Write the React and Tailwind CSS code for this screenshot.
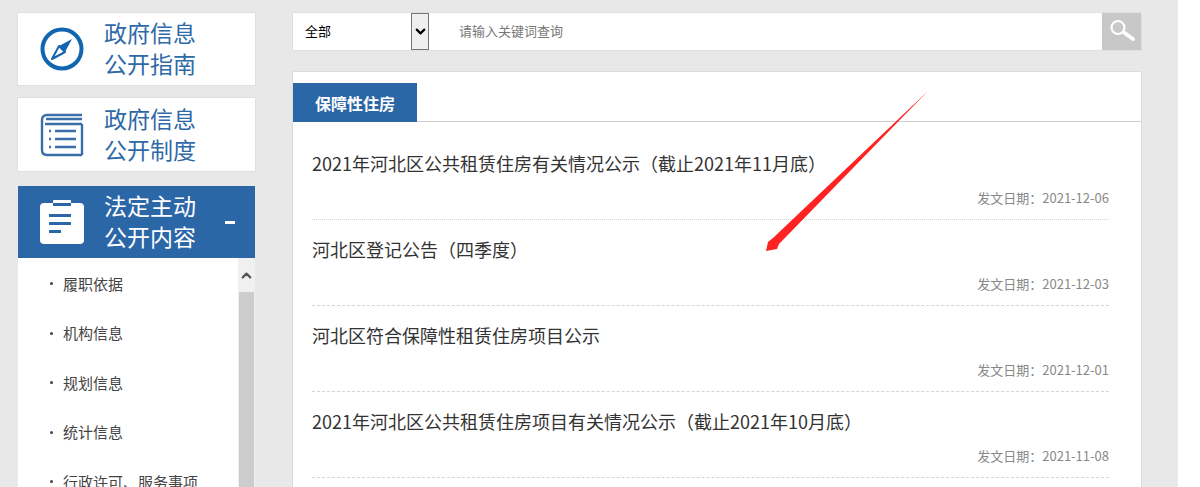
import React from 'react';
import { ChevronDown, ChevronUp } from 'lucide-react';

const cjk = { fontFamily: '"Noto Sans CJK SC", "Liberation Sans", sans-serif' };

const news = [
    { title: '2021年河北区公共租赁住房有关情况公示\uFF08截止2021年11月底\uFF09', date: '发文日期\uFF1A2021-12-06', dotted: true },
    { title: '河北区登记公告\uFF08四季度\uFF09', date: '发文日期\uFF1A2021-12-03' },
    { title: '河北区符合保障性租赁住房项目公示', date: '发文日期\uFF1A2021-12-01' },
    { title: '2021年河北区公共租赁住房项目有关情况公示\uFF08截止2021年10月底\uFF09', date: '发文日期\uFF1A2021-11-08' },
];

const subMenu = ['履职依据', '机构信息', '规划信息', '统计信息', '行政许可、服务事项'];

const CompassIcon = () => (
    <svg width="44" height="44" viewBox="0 0 44 44" fill="none">
        <circle cx="22" cy="22" r="19.5" stroke="#1266b0" strokeWidth="4" />
        <path d="M32 12 L25 25 L19 19 Z" fill="#1266b0" />
        <path d="M12 32 L19 19 L25 25 Z" fill="none" stroke="#1266b0" strokeWidth="2" strokeLinejoin="round" />
    </svg>
);

const ListIcon = () => (
    <svg width="44" height="44" viewBox="0 0 44 44" fill="none" stroke="#3a6ea8" strokeWidth="2.4">
        <path d="M42 2 H7 Q2 2 2 7 V37 Q2 42 7 42 H42" />
        <path d="M6 6 H42" />
        <path d="M42 11 H5 M42 11 V42" />
        <path d="M15 18 H36 M15 26 H36 M15 34 H36" />
        <path d="M9 18 H11 M9 26 H11 M9 34 H11" />
    </svg>
);

const ClipboardIcon = () => (
    <svg width="44" height="44" viewBox="0 0 44 44">
        <path d="M4 3 H13 V1 Q13 0 14 0 H30 Q31 0 31 1 V3 H40 Q44 3 44 7 V40 Q44 44 40 44 H4 Q0 44 0 40 V7 Q0 3 4 3 Z" fill="#fff" />
        <path d="M13 3 H31 V6 H13 Z" fill="#2b66a6" />
        <path d="M9 14 H31 V17 H9 Z M9 22 H31 V25 H9 Z M9 30 H21 V33 H9 Z" fill="#2b66a6" />
    </svg>
);

const SideCard = ({ icon, top, bottom, active, height }) => (
    <div className={`flex items-center pl-[22px] ${height} ${active ? 'bg-[#2b66a6] text-white' : 'bg-white text-[#2e69a8] shadow-[0_0_0_1px_#e0e0e0]'}`}>
        <div className="w-[64px] shrink-0 flex">{icon}</div>
        <div className="text-[23px] leading-[31px] w-[121px] pb-[2px]">
            {top}<br />{bottom}
        </div>
        {active && <div className="w-[10px] h-[3px] bg-white"></div>}
    </div>
);

const SearchBar = () => (
    <div className="h-[37px] bg-white flex items-stretch shadow-[0_0_0_1px_#e0e0e0]">
        <div className="w-[118px] pl-[12px] pb-[2px] flex items-center text-[13px] text-black">全部</div>
        <div className="w-[18px] bg-[#efefef] border border-[#767676] flex items-center justify-center">
            <ChevronDown size={15} strokeWidth={3.5} color="#000" />
        </div>
        <div className="flex-1 pl-[30px] pb-[2px] flex items-center text-[13px] text-[#777]">请输入关键词查询</div>
        <div className="w-[39px] bg-[#c8c8c8] flex items-center justify-center">
            <svg width="30" height="30" viewBox="0 0 30 30" fill="none" stroke="#fff">
                <circle cx="11" cy="10.5" r="6.5" strokeWidth="2.2" />
                <path d="M17 15.5 L26 22" strokeWidth="4" strokeLinecap="round" />
            </svg>
        </div>
    </div>
);

const NewsRow = ({ item }) => (
    <div className={`h-[86px] flex flex-col border-b border-[#d4d4d4] ${item.dotted ? 'border-dotted' : 'border-dashed'}`}>
        <div className="text-[18px] leading-[26px] text-[#333] mt-[16px] whitespace-nowrap">{item.title}</div>
        <div className="text-[13px] leading-[16px] text-[#888] text-right mt-[14px]">{item.date}</div>
    </div>
);

const App = () => {
    return (
        <div className="w-[1200px] h-[487px] bg-white overflow-hidden" style={cjk}>
            <div className="w-[1178px] h-full bg-[#e8e8e8] flex pl-[18px] pt-[13px]">
                {/* 左侧菜单 */}
                <div className="w-[237px] shrink-0 flex flex-col">
                    <SideCard height="h-[72px]" icon={<CompassIcon />} top="政府信息" bottom="公开指南" />
                    <div className="mt-[13px]">
                        <SideCard height="h-[73px]" icon={<ListIcon />} top="政府信息" bottom="公开制度" />
                    </div>
                    <div className="mt-[15px]">
                        <SideCard height="h-[72px]" icon={<ClipboardIcon />} top="法定主动" bottom="公开内容" active />
                    </div>
                    <div className="flex-1 bg-white flex overflow-hidden">
                        <div className="flex-1 pl-[32px] pt-[1px]">
                            {subMenu.map(label => (
                                <div key={label} className="h-[49.5px] flex items-center text-[15px] text-[#444] whitespace-nowrap">
                                    <span className="w-[3px] h-[3px] rounded-full bg-[#444] mr-[10px]"></span>
                                    {label}
                                </div>
                            ))}
                        </div>
                        <div className="w-[17px] bg-[#f0f0f0] flex flex-col">
                            <div className="h-[34px] flex items-center justify-center">
                                <ChevronUp size={15} strokeWidth={3.5} color="#555" />
                            </div>
                            <div className="flex-1 mx-[1px] bg-[#cdcdcd]"></div>
                        </div>
                    </div>
                </div>

                {/* 右侧内容 */}
                <div className="w-[848px] ml-[38px] flex flex-col">
                    <SearchBar />
                    <div className="mt-[22px] flex-1 bg-white pt-[11px] shadow-[0_0_0_1px_#dcdcdc] relative">
                        <div className="border-b border-[#d0d0d0] h-[39px]">
                            <div className="w-[124px] h-[39px] bg-[#2b66a6] text-white text-[16px] font-bold flex items-center justify-center">保障性住房</div>
                        </div>
                        <div className="pl-[19px] pr-[32px] pt-[12px]">
                            {news.map(item => <NewsRow key={item.date} item={item} />)}
                        </div>
                        {/* 红色箭头标注 */}
                        <svg className="absolute left-[465px] top-[15px]" width="175" height="170" viewBox="0 0 175 170">
                            <path d="M170 4 L15 151 L10 155 L8 164 L19 162 L21 157 Z" fill="#f22" />
                        </svg>
                    </div>
                </div>
            </div>
        </div>
    );
};
export default App;
